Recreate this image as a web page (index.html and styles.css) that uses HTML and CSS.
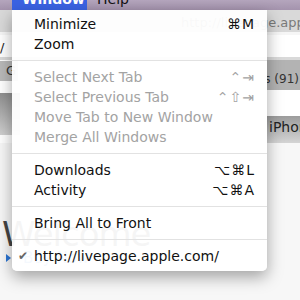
FILE: index.html
```html
<!DOCTYPE html>
<html lang="en">
<head>
    <meta charset="UTF-8">
    <title>Window menu</title>
    <link rel="stylesheet" href="styles.css">
</head>
<body>
    <div class="menubar">
        <span class="menubar-item active">Window</span>
        <span class="menubar-item">Help</span>
    </div>
    <div class="titlebar"><span class="title-text">http://livepage.apple.com/</span></div>
    <div class="toolbar">
        <div class="url-field"><span class="url-text">apple.com/</span></div>
    </div>
    <div class="bookmarks">
        <span class="bm-button left">G</span>
        <span class="bm-button right"><span>Top Sites (91)</span></span>
    </div>
    <div class="page">
        <div class="nav">
            <span class="nav-left"></span>
            <span class="nav-item">iPhone</span>
        </div>
        <div class="hero">
            <div class="welcome">Welcome</div>
            <div class="buy"><span class="arrow"></span>Buy Now ›</div>
        </div>
    </div>

    <div class="menu">
        <div class="item"><span>Minimize</span><span class="key">⌘M</span></div>
        <div class="item"><span>Zoom</span></div>
        <div class="sep"></div>
        <div class="item off"><span>Select Next Tab</span><span class="key">⌃⇥</span></div>
        <div class="item off"><span>Select Previous Tab</span><span class="key">⌃⇧⇥</span></div>
        <div class="item off"><span>Move Tab to New Window</span></div>
        <div class="item off"><span>Merge All Windows</span></div>
        <div class="sep"></div>
        <div class="item"><span>Downloads</span><span class="key">⌥⌘L</span></div>
        <div class="item"><span>Activity</span><span class="key">⌥⌘A</span></div>
        <div class="sep"></div>
        <div class="item"><span>Bring All to Front</span></div>
        <div class="sep"></div>
        <div class="item"><span class="check">✔</span><span>http://livepage.apple.com/</span></div>
    </div>
</body>
</html>
```

FILE: styles.css
```css
body {
    margin: 0;
    width: 300px;
    height: 300px;
    overflow: hidden;
    position: relative;
    font-family: "DejaVu Sans", sans-serif;
    background: #f6f6f6;
}

.menubar {
    height: 22px;
    margin-top: -12px;
    display: flex;
    padding-left: 12px;
    background: linear-gradient(#c8bcd0, #a493ad);
    font-size: 14px;
    line-height: 22px;
}
.menubar-item {
    padding: 0 12px 0 10px;
    color: #111;
}
.menubar-item.active {
    width: 53px;
    background: #3b63e3;
    color: #fff;
    font-weight: bold;
}

.titlebar {
    height: 22px;
    background: #d9d9d9;
    font-size: 13px;
    line-height: 26px;
    color: #7a7a7a;
    white-space: nowrap;
    overflow: hidden;
}
.title-text {
    margin-left: 181px;
}

.toolbar {
    height: 25px;
    background: #d9d9d9;
}
.url-field {
    height: 22px;
    margin-top: 3px;
    background: #fff;
    font-size: 13px;
    line-height: 26px;
    color: #222;
    white-space: nowrap;
    overflow: hidden;
}
.url-text {
    display: inline-block;
    margin-left: -68px;
}

.bookmarks {
    height: 33px;
    background: #fff;
    display: flex;
    justify-content: space-between;
    align-items: flex-start;
    font-size: 13px;
}
.bm-button {
    background: #b9b9b9;
    color: #333;
    line-height: 20px;
    height: 20px;
    white-space: nowrap;
}
.bm-button.left {
    margin-top: 1px;
    padding: 0 2px 0 6px;
}
.bm-button.right {
    width: 32px;
    height: 30px;
    padding-right: 1px;
    font-size: 12px;
    line-height: 38px;
    display: flex;
    justify-content: flex-end;
    overflow: hidden;
    background: #b3b3b3;
}

.page {
    background: #fff;
}
.nav {
    height: 50px;
    display: flex;
    justify-content: space-between;
    align-items: flex-end;
}
.nav-left {
    width: 20px;
    height: 42px;
    align-self: flex-start;
    background: linear-gradient(#8f8f8f, #cfcfcf);
}
.nav-item {
    height: 27px;
    width: 31px;
    padding-left: 2px;
    font-size: 14px;
    line-height: 22px;
    color: #222;
    white-space: nowrap;
    overflow: hidden;
    background: linear-gradient(#9c9c9c, #d4d4d4);
}

.hero {
    height: 160px;
    background: #f7f7f7;
    padding-top: 76px;
    padding-left: 2px;
}
.welcome {
    width: 120px;
    font-size: 34px;
    color: #444;
    line-height: 30px;
    letter-spacing: -1px;
}
.buy {
    font-size: 15px;
    color: #2a75d5;
    margin-left: 4px;
    display: flex;
    align-items: center;
}
.arrow {
    width: 0;
    height: 0;
    border-left: 5px solid #2a75d5;
    border-top: 4px solid transparent;
    border-bottom: 4px solid transparent;
    margin-right: 12px;
}

.menu {
    position: absolute;
    left: 12px;
    top: 10px;
    width: 255px;
    padding: 4px 0 5px;
    background: rgba(255, 255, 255, 0.95);
    border-radius: 0 0 5px 5px;
    box-shadow: 0 6px 16px rgba(0, 0, 0, 0.35);
    font-size: 14px;
}
.item {
    height: 20px;
    line-height: 20px;
    padding: 0 12px 0 22px;
    display: flex;
    justify-content: space-between;
    color: #111;
    position: relative;
    white-space: nowrap;
}
.item.off {
    color: #a3a3a3;
}
.key {
    letter-spacing: 1px;
}
.check {
    position: absolute;
    left: 6px;
    font-size: 12px;
    color: #666;
}
.sep {
    height: 1px;
    margin: 6px 0;
    background: #e2e2e2;
}
```
